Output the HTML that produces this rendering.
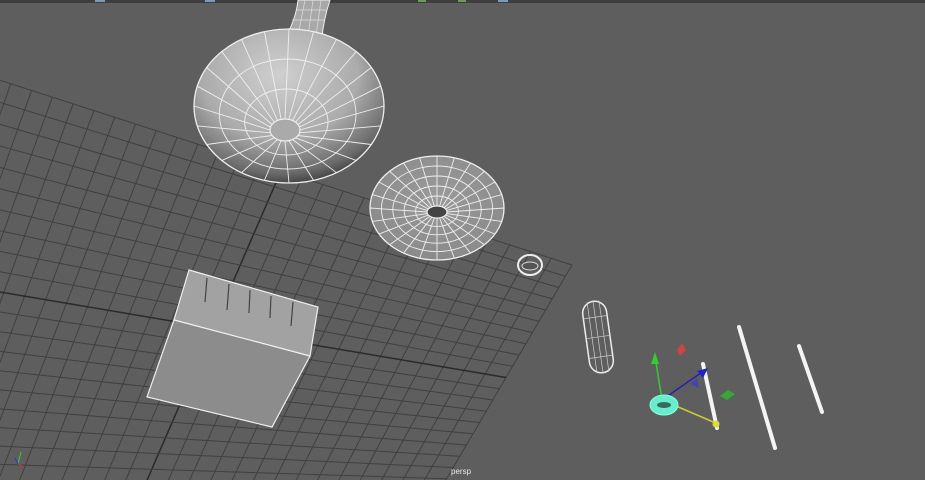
<!DOCTYPE html>
<html><head><meta charset="utf-8"><style>
html,body{margin:0;padding:0;background:#5e5e5e;width:925px;height:480px;overflow:hidden}
svg{display:block}
</style></head><body>
<svg id="s" width="925" height="480" viewBox="0 0 925 480" xmlns="http://www.w3.org/2000/svg">
<defs>
<radialGradient id="bowl" cx="0.45" cy="0.3" r="0.75">
<stop offset="0" stop-color="#cfcfcf"/><stop offset="0.55" stop-color="#ababab"/><stop offset="0.85" stop-color="#6a6a6a"/><stop offset="1" stop-color="#2e2e2e"/>
</radialGradient>
<radialGradient id="disc" cx="0.5" cy="0.4" r="0.6">
<stop offset="0" stop-color="#9a9a9a"/><stop offset="1" stop-color="#8a8a8a"/>
</radialGradient>
</defs>
<rect width="925" height="480" fill="#5e5e5e"/>
<rect width="925" height="3" fill="#3e3e3e"/>
<rect x="95" y="0" width="10" height="2" fill="#7a9ab8"/>
<rect x="205" y="0" width="10" height="2" fill="#7a9ab8"/>
<rect x="418" y="0" width="8" height="2" fill="#6a9a5a"/>
<rect x="458" y="0" width="8" height="2" fill="#6a9a5a"/>
<rect x="498" y="0" width="10" height="2" fill="#7a9ab8"/>
<g id="grid" stroke="#404040" stroke-width="1" fill="none"></g>
<!-- stem -->
<path d="M298,0 L330,0 L327,10 Q322,30 322,40 L284,40 Q296,20 298,0 Z" fill="#a8a8a8" stroke="#eee" stroke-width="1"/>
<g stroke="#ddd" stroke-width="0.7"><line x1="305" y1="0" x2="298" y2="36"/><line x1="313" y1="0" x2="308" y2="36"/><line x1="321" y1="0" x2="316" y2="36"/><line x1="297" y1="10" x2="326" y2="10"/><line x1="292" y1="20" x2="324" y2="20"/></g>
<g id="bowlg"></g>
<g id="discg"></g>
<!-- small ring -->
<ellipse cx="530" cy="265" rx="12" ry="10" fill="none" stroke="#eee" stroke-width="2"/>
<ellipse cx="530" cy="266" rx="8" ry="4" fill="#555" stroke="#ddd"/>
<!-- cube -->
<polygon points="189,270 318,307 310,356 174,320" fill="#a2a2a2" stroke="#eee" stroke-width="1.2"/>
<polygon points="174,320 310,356 272,427 147,397" fill="#8c8c8c" stroke="#eee" stroke-width="1.2"/>
<g stroke="#444" stroke-width="1.2">
<line x1="207" y1="278" x2="205" y2="302"/><line x1="229" y1="284" x2="227" y2="310"/><line x1="250" y1="290" x2="249" y2="313"/><line x1="271" y1="296" x2="270" y2="318"/><line x1="293" y1="302" x2="291" y2="326"/>
</g>
<!-- cylinder -->
<g transform="translate(598,337) rotate(-8)">
<rect x="-12" y="-36" width="24" height="72" rx="12" fill="none" stroke="#eee" stroke-width="1.5"/>
<g stroke="#ccc" stroke-width="0.7"><line x1="-6" y1="-36" x2="-6" y2="36"/><line x1="0" y1="-37" x2="0" y2="37"/><line x1="6" y1="-36" x2="6" y2="36"/>
<line x1="-12" y1="-20" x2="12" y2="-20"/><line x1="-12" y1="0" x2="12" y2="0"/><line x1="-12" y1="20" x2="12" y2="20"/></g>
</g>
<!-- white sticks -->
<g stroke="#f4f4f4" stroke-width="4" stroke-linecap="round">
<line x1="703" y1="364" x2="717" y2="428"/>
<line x1="739" y1="327" x2="775" y2="448"/>
<line x1="799" y1="346" x2="822" y2="412"/>
</g>
<!-- gizmo -->
<line x1="662" y1="400" x2="655" y2="356" stroke="#3c3" stroke-width="1.5"/>
<polygon points="655,352 651,364 659,364" fill="#3c3"/>
<line x1="662" y1="400" x2="705" y2="370" stroke="#22a" stroke-width="1.5"/>
<polygon points="708,368 697,371 703,378" fill="#22c"/>
<line x1="662" y1="400" x2="718" y2="424" stroke="#cc3" stroke-width="1.5"/>
<circle cx="716" cy="424" r="3.5" fill="#dd3"/>
<polygon points="682,343 686,350 680,356 677,350" fill="#c44"/>
<polygon points="720,396 728,390 735,394 727,400" fill="#3a3"/>
<polygon points="690,384 697,378 699,388" fill="#44a"/>
<ellipse cx="664" cy="405" rx="14" ry="10" fill="#6ec" stroke="#8fd" stroke-width="1"/>
<ellipse cx="664" cy="405" rx="7" ry="3" fill="#3a6a5a"/>
<!-- axis icon -->
<line x1="18" y1="464" x2="21" y2="452" stroke="#3c3" stroke-width="1"/>
<line x1="18" y1="464" x2="24" y2="467" stroke="#c33" stroke-width="1"/>
<line x1="18" y1="464" x2="15" y2="458" stroke="#33c" stroke-width="1"/>
<text x="451" y="474" font-family="Liberation Sans, sans-serif" font-size="8" fill="#e6e6e6">persp</text>
</svg>
<script>
var NS="http://www.w3.org/2000/svg";
function el(p,t,a){var e=document.createElementNS(NS,t);for(var k in a)e.setAttribute(k,a[k]);p.appendChild(e);return e;}
var g=document.getElementById('grid');
var A=[-10,77],B=[572,265],C=[440,490],D=[-150,480];
function bl(u,v){var x=(1-u)*(1-v)*A[0]+u*(1-v)*B[0]+u*v*C[0]+(1-u)*v*D[0];var y=(1-u)*(1-v)*A[1]+u*(1-v)*B[1]+u*v*C[1]+(1-u)*v*D[1];return [x,y];}
var NU=28,NV=20;
for(var i=0;i<=NU;i++){var u=i/NU,p=bl(u,0),q=bl(u,1);el(g,'line',{x1:p[0],y1:p[1],x2:q[0],y2:q[1],stroke:(i==NU/2?'#2a2a2a':'#404040'),'stroke-width':(i==NU/2?1.5:1)});}
for(var j=0;j<=NV;j++){var v=j/NV,p=bl(0,v),q=bl(1,v);el(g,'line',{x1:p[0],y1:p[1],x2:q[0],y2:q[1],stroke:(j==NV/2?'#2a2a2a':'#404040'),'stroke-width':(j==NV/2?1.5:1)});}
function dome(gid,cx,cy,rx,ry,hx,hy,hr,hry,fill,rad,rings){
var b=document.getElementById(gid);
el(b,'ellipse',{cx:cx,cy:cy,rx:rx,ry:ry,fill:fill,stroke:'#eee','stroke-width':1.3});
for(var r=1;r<rings;r++){var t=r/rings;var ex=hx+(cx-hx)*t,ey=hy+(cy-hy)*t;
el(b,'ellipse',{cx:ex,cy:ey,rx:hr+(rx-hr)*t,ry:hry+(ry-hry)*t,fill:'none',stroke:'#eee','stroke-width':0.9});}
for(var k=0;k<rad;k++){var a=k/rad*Math.PI*2;el(b,'line',{x1:hx+hr*Math.cos(a),y1:hy+hry*Math.sin(a),x2:cx+rx*Math.cos(a),y2:cy+ry*Math.sin(a),stroke:'#eee','stroke-width':0.9});}
el(b,'ellipse',{cx:hx,cy:hy,rx:hr,ry:hry,fill:gid=='bowlg'?'#aaa':'#444',stroke:'#eee','stroke-width':1.2});
}
dome('bowlg',289,106,95,77,285,130,15,11,'url(#bowl)',24,3);
dome('discg',437,208,67,52,437,212,10,6,'url(#disc)',24,5);
</script>
</body></html>
